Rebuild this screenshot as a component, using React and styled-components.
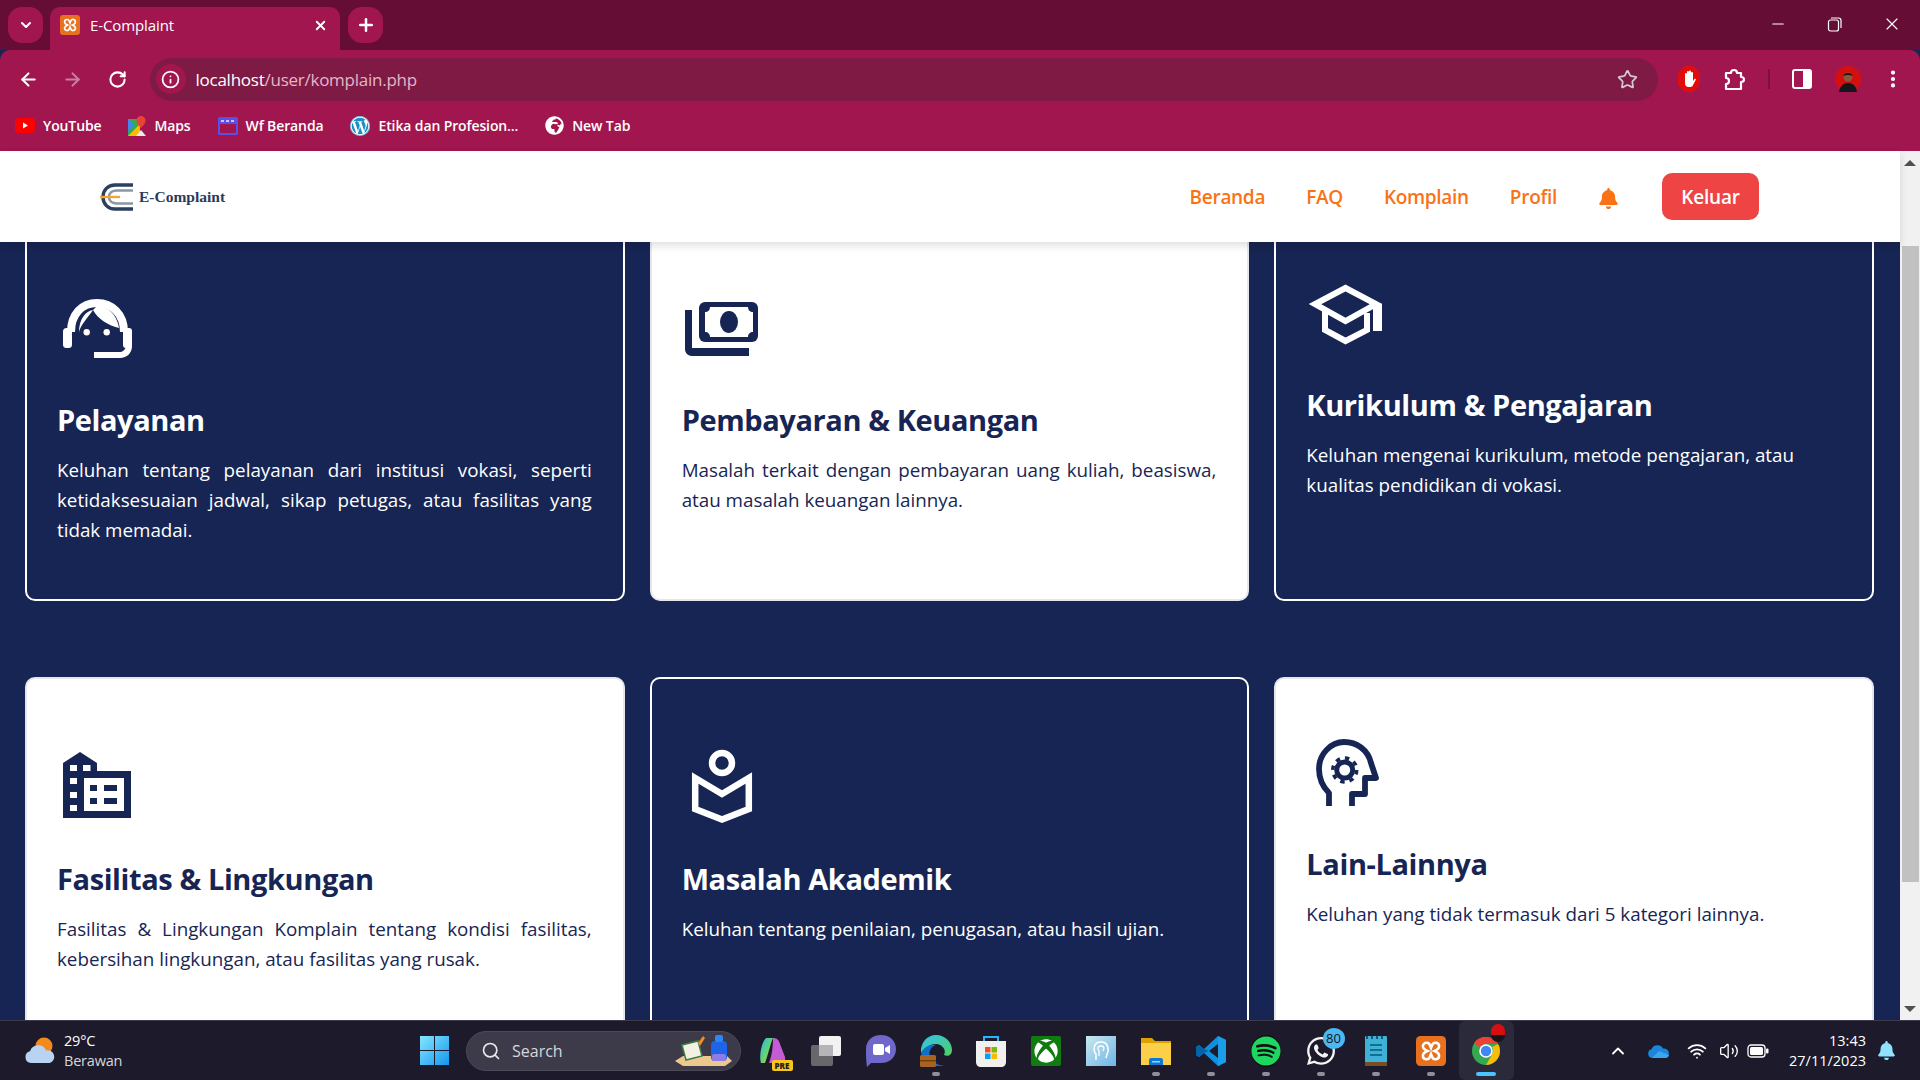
import React from "react";
import styled, { createGlobalStyle } from "styled-components";
import { ArrowLeft, ArrowRight, RotateCw, Info, Star, MoreVertical, ChevronDown, Plus, X, Minus, Search, Wifi, Volume2, ChevronUp } from "lucide-react";
import { FaBell, FaWordpress, FaGlobeAfrica, FaXbox, FaSpotify, FaWhatsapp } from "react-icons/fa";

const Global = createGlobalStyle`
  html, body { margin: 0; padding: 0; height: 100%; overflow: hidden; }
  body { font-family: "Open Sans", "Noto Sans", sans-serif; }
  * { box-sizing: border-box; }
`;

const NAVY = "#172554";
const FONT = `"Open Sans", "Noto Sans", sans-serif`;

const Screen = styled.div`
  width: 1920px; height: 1080px; display: flex; flex-direction: column; overflow: hidden; background: ${NAVY};
`;

/* ---------- browser chrome ---------- */
const TabStrip = styled.div`
  height: 50px; flex: none; background: #650d35; display: flex; align-items: flex-end; padding-left: 8px; color: #fff;
`;
const RoundBtn = styled.div`
  width: ${p => p.$w}px; height: 36px; margin: 0 0 7px ${p => p.$ml || 0}px; border-radius: 14px; background: #a1164f;
  display: flex; align-items: center; justify-content: center;
`;
const Tab = styled.div`
  width: 290px; height: 43px; margin-left: 7px; background: #a1164f; border-radius: 10px 10px 0 0;
  display: flex; align-items: center; padding: 0 12px 7px 10px; gap: 10px; font-size: 15px; font-weight: 500;
`;
const TabTitle = styled.span`flex: 1; letter-spacing: -0.1px;`;
const WinControls = styled.div`
  margin-left: auto; display: flex; height: 50px; align-items: flex-start;
`;
const WinBtn = styled.div`
  width: 57px; height: 48px; display: flex; align-items: center; justify-content: center;
`;
const Toolbar = styled.div`
  height: 58px; flex: none; background: #a1164f; border-radius: 10px 10px 0 0; display: flex; align-items: center;
  padding-left: 6px; color: #fff;
`;
const NavSlot = styled.div`
  width: 44.5px; display: flex; justify-content: center; opacity: ${p => p.$dim ? 0.45 : 1};
`;
const UrlPill = styled.div`
  width: 1508px; height: 43px; margin: 0 9px 0 10px; flex: none; border-radius: 22px; background: #7f1a44; display: flex; align-items: center;
  padding: 0 20px 0 6px;
`;
const InfoDot = styled.div`
  width: 30px; height: 30px; border-radius: 50%; background: #a1164f; display: flex; align-items: center; justify-content: center;
`;
const UrlText = styled.div`
  margin-left: 10px; flex: 1; font-size: 17px; letter-spacing: -0.25px; color: #fff;
  span { color: #e2b7c9; }
`;
const ActionSlot = styled.div`
  width: ${p => p.$w || 45.5}px; display: flex; justify-content: center; align-items: center;
`;
const ToolDivider = styled.div`
  width: 2px; height: 20px; background: #7d1040; margin: 0 10px;
`;
const Bookmarks = styled.div`
  height: 43px; flex: none; background: #a1164f; display: flex; align-items: center; padding: 0 0 8px 15px; gap: 27px; color: #fff;
`;
const Bookmark = styled.div`
  display: flex; align-items: center; gap: 8px; font-size: 14px; font-weight: 600; letter-spacing: -0.12px; white-space: nowrap;
`;
const WpMark = styled.span`
  width: 20px; height: 20px; border-radius: 50%; background: #fff; color: #1d8fc4; display: flex;
`;

/* ---------- page ---------- */
const Viewport = styled.div`
  flex: 1; min-height: 0; display: flex;
`;
const Page = styled.div`
  flex: 1; min-width: 0; display: flex; flex-direction: column; background: ${NAVY};
`;
const Nav = styled.nav`
  height: 91px; flex: none; background: #fff; display: flex; align-items: center; padding: 0 141px 0 100px;
  position: relative; z-index: 2; box-shadow: 0 4px 8px rgba(0,0,0,.12);
`;
const Brand = styled.div`
  display: flex; align-items: center; gap: 5px; margin-right: auto;
`;
const BrandName = styled.span`
  font-family: "Liberation Serif", serif; font-weight: 700; font-size: 15.5px; color: #2b3a5a;
`;
const NavLinks = styled.div`
  display: flex; align-items: center; gap: 41px;
`;
const NavLink = styled.a`
  font-size: 19px; font-weight: 600; color: #f97316; letter-spacing: -0.3px;
`;
const BellWrap = styled.div`
  margin: 4px 43px 0 41px; display: flex; color: #f97316;
`;
const Logout = styled.button`
  width: 97px; height: 47px; border: 0; border-radius: 10px; background: #ef4444; color: #fff;
  font-family: ${FONT}; font-size: 19px; font-weight: 600; letter-spacing: -0.2px;
`;
const Content = styled.div`
  flex: 1; min-height: 0; overflow: hidden;
`;
const Grid = styled.div`
  margin-top: -24px; padding: 0 26px 0 25px; display: grid; grid-template-columns: repeat(3, 1fr); column-gap: 25px; row-gap: 76px;
`;
const Card = styled.article`
  height: 383px; border-radius: 10px; padding: ${p => p.$tight ? 51 : 66}px 31px 0 30px;
  border: 2px solid ${p => p.$light ? "#e5e7eb" : "#fff"};
  background: ${p => p.$light ? "#fff" : NAVY};
  color: ${p => p.$light ? NAVY : "#fff"};
`;
const IconBox = styled.svg`
  display: block; width: 80px; height: 80px;
`;
const CardTitle = styled.h3`
  margin: 34px 0 0; font-size: 29px; font-weight: 700; line-height: 40px; letter-spacing: -0.4px;
`;
const CardText = styled.p`
  margin: 15px 0 0; font-size: 18.8px; line-height: 30px; text-align: ${p => p.$left ? "left" : "justify"};
`;
const ScrollBar = styled.div`
  width: 20px; flex: none; background: #f1f1f1; display: flex; flex-direction: column; align-items: center;
`;
const ScrollBtn = styled.div`
  height: 23px; flex: none; display: flex; align-items: center; justify-content: center;
`;
const Tri = styled.div`
  width: 0; height: 0; border-left: 6px solid transparent; border-right: 6px solid transparent;
  ${p => p.$down ? "border-top: 6px solid #505050;" : "border-bottom: 6px solid #505050;"}
`;
const Thumb = styled.div`
  width: 17px; height: 636px; margin-top: 72px; background: #c1c1c1;
`;
const Spacer = styled.div`flex: 1;`;

/* ---------- taskbar ---------- */
const Taskbar = styled.footer`
  height: 60px; flex: none; background: #1c1a2b; border-top: 1px solid #3b3a4a; display: flex; align-items: center; color: #fff;
`;
const Weather = styled.div`
  width: 420px; display: flex; align-items: center; padding-left: 24px; gap: 8px;
`;
const WeatherText = styled.div`
  font-size: 14.5px; line-height: 20px; letter-spacing: -0.2px; color: #d8d8dc;
  b { display: block; font-weight: 400; color: #fff; }
`;
const SearchBox = styled.div`
  width: 275px; height: 40px; margin-left: 17px; border-radius: 20px; background: #3d3b49; border: 1px solid #4c4a58; display: flex; align-items: center;
  padding: 0 7px 0 14px; gap: 11px; font-size: 16px; color: #d6d6da;
`;
const SearchLabel = styled.span`flex: 1;`;
const CopilotSlot = styled.div`
  width: 55px; height: 59px; margin-left: 3.5px; display: flex; align-items: center; justify-content: center; position: relative;
`;
const Apps = styled.div`
  display: flex; margin-left: -1px;
`;
const Slot = styled.div`
  width: 55px; height: 59px; display: flex; align-items: center; justify-content: center; position: relative;
  border-radius: 6px;
  background: ${p => p.$active ? "#2b2a3a" : "transparent"};
`;
const Dot = styled.span`
  position: absolute; left: 50%; bottom: 4px; transform: translateX(-50%); height: 4px; border-radius: 2px;
  width: ${p => p.$active ? 20 : 8}px; background: ${p => p.$active ? "#4cc2ff" : "#8f8f98"};
`;
const Count = styled.span`
  position: absolute; left: 29px; top: 7px; width: 22px; height: 21px; border-radius: 50%; background: #4cb8f0; color: #10151f;
  font-size: 13px; line-height: 21px; text-align: center;
`;
const PreBadge = styled.span`
  position: absolute; left: 27px; top: 39px; width: 21px; height: 11px; border-radius: 2px; background: #f7c61e; color: #222; font-size: 8px; font-weight: 800; line-height: 11px; text-align: center;
`;
const Tray = styled.div`
  margin-left: auto; display: flex; align-items: center; padding-right: 24px;
`;
const TrayIcon = styled.div`
  width: ${p => p.$w}px; display: flex; justify-content: center;
`;
const Clock = styled.div`
  width: 92px; margin: 0 11px 0 0; text-align: right; font-size: 14.5px; line-height: 20px; letter-spacing: 0;
`;

/* ---------- drawings ---------- */
const CardIcon = ({ children }) => <IconBox viewBox="0 0 80 80" fill="currentColor">{children}</IconBox>;

const Headset = () => (
  <CardIcon>
    <path d="M14 46C14 28 25 17 40 17S67 28 67 46" fill="none" stroke="currentColor" strokeWidth="8" />
    <rect x="6" y="42" width="9" height="20" rx="3.5" />
    <rect x="66" y="42" width="9" height="20" rx="3" />
    <path d="M37 66H62C66 66 68 64 69 60H75C75 67 70 72 63 72H37Z" />
    <path d="M36 24C41 33 50 39 62 42C60 30 52 20 40 20Z" />
    <path d="M22 46C24 38 30 33 36 24C28 25 22 34 22 46Z" />
    <circle cx="29.7" cy="46.3" r="3.2" />
    <circle cx="49.7" cy="46.3" r="3.2" />
  </CardIcon>
);
const Money = () => (
  <CardIcon>
    <rect x="17" y="16" width="59" height="40" rx="6" />
    <path fill="#fff" d="M28 21H66C66 24 68 26 71 26V46C68 46 66 48 66 51H28C28 48 26 46 23 46V26C26 26 28 24 28 21Z" />
    <ellipse cx="47" cy="36" rx="9" ry="11" />
    <path d="M3 24H10V62H67V70H10C6 70 3 67 3 63Z" />
  </CardIcon>
);
const Cap = () => (
  <CardIcon>
    <g fill="none" stroke="currentColor" strokeWidth="6">
      <path d="M39.5 17L9 33L39.5 50L70 33Z" />
      <path d="M19 40V59L39.5 70L61 59V42" />
    </g>
    <path d="M67 31L76 33V60H67Z" />
  </CardIcon>
);
const Building = () => (
  <CardIcon>
    <path fillRule="evenodd" d="M6 18L23 7L40 18V26H74V73H6ZM13 20V26H20V20ZM26 20V26H33.5V20ZM13 33V39H20V33ZM13 47V53H20V47ZM13 60V66H20V60ZM27 33V66H67V33Z" />
    <path d="M33 40H40V46H33ZM47 40H60V46H47ZM33 53H40V59H33ZM47 53H60V59H47Z" />
  </CardIcon>
);
const Book = () => (
  <CardIcon>
    <g fill="none" stroke="currentColor" strokeWidth="6.5">
      <circle cx="40" cy="18" r="10" />
      <path d="M13.2 33L40 49L66.8 33V64L40 74.500L13.2 64Z" />
    </g>
  </CardIcon>
);
const Head = () => (
  <CardIcon>
    <path d="M23 76V63C16 56 13 48 13 39C13 24 25 12 38 12C51 12 62 20 65 33L70 48H59V64H46V76" fill="none" stroke="currentColor" strokeWidth="5.8" strokeLinejoin="round" />
    <circle cx="38.7" cy="40" r="8" fill="none" stroke="currentColor" strokeWidth="5" />
    <circle cx="38.7" cy="40" r="12" fill="none" stroke="currentColor" strokeWidth="3.5" strokeDasharray="4.4 5" />
  </CardIcon>
);

const Logo = () => (
  <svg width="34" height="30" viewBox="0 0 34 30" fill="none">
    <path d="M33 3H15C8 3 3 8 3 15S8 27 15 27H33" stroke="#2b3f5f" strokeWidth="3.4" />
    <path d="M33 8.5H17C12 8.5 9 11 9 15S12 21.5 17 21.5H33" stroke="#8b97a8" strokeWidth="2.6" />
    <path d="M0 15H20" stroke="#f2a630" strokeWidth="2.4" />
  </svg>
);
const Xampp = ({ s = 20 }) => (
  <svg width={s} height={s} viewBox="0 0 20 20">
    <rect width="20" height="20" rx="3" fill="#e8711f" />
    <path d="M7 4.500a2.400 2.400 0 0 0-2.400 2.400C4.600 8.500 6 9.300 7.600 10 6 10.700 4.600 11.500 4.600 13.100a2.400 2.400 0 0 0 4.700.7L10 12l.7 1.800a2.400 2.400 0 0 0 4.700-.7c0-1.600-1.400-2.400-3-3.100 1.600-.7 3-1.500 3-3.100a2.400 2.400 0 0 0-4.700-.7L10 8l-.7-1.800A2.400 2.400 0 0 0 7 4.500Z" fill="none" stroke="#fff" strokeWidth="1.700" />
  </svg>
);
const Hand = () => (
  <svg width="22" height="26" viewBox="0 0 22 26">
    <path d="M7 0H15L22 7V19L15 26H7L0 19V7Z" fill="#e10c0c" />
    <path d="M7 15V8a1 1 0 0 1 2 0V6a1 1 0 0 1 2 0V5.500a1 1 0 0 1 2 0V7a1 1 0 0 1 2 0v8l1.500-2c.8-.8 1.800 0 1.300.8L14.500 20c-.6.800-1.500 1-2.500 1h-1.500C8.500 21 7 19.500 7 17.500Z" fill="#fff" />
  </svg>
);
const Puzzle = () => (
  <svg width="22" height="24" viewBox="0 0 22 24" fill="none" stroke="#fff" strokeWidth="2.2" strokeLinejoin="round">
    <path d="M2 6H7C7 2 13 2 13 6H17V10C21 10 21 15 17 15V22H2V17C6 17 6 11 2 11Z" />
  </svg>
);
const SidePanel = () => (
  <svg width="20" height="20" viewBox="0 0 20 20">
    <rect x="1" y="1" width="18" height="18" rx="2" fill="none" stroke="#fff" strokeWidth="2" />
    <rect x="11" y="1" width="8" height="18" fill="#fff" />
  </svg>
);
const Avatar = () => (
  <svg width="26" height="26" viewBox="0 0 26 26">
    <circle cx="13" cy="13" r="13" fill="#d50f0f" />
    <path d="M4 26C5 19 9 17 13 17S21 19 22 26Z" fill="#15151c" />
    <circle cx="13" cy="11" r="4.500" fill="#8a5a3c" />
    <path d="M8.500 10C8.500 6 17.500 6 17.500 10C15 8.500 11 8.500 8.500 10Z" fill="#161616" />
  </svg>
);
const Restore = () => (
  <svg width="15" height="15" viewBox="0 0 15 15" fill="none" stroke="#fff" strokeWidth="1.200">
    <rect x="1.500" y="3" width="10" height="11" rx="2" />
    <path d="M4 1H11.500C13 1 14 2 14 3.500V11" />
  </svg>
);
const YouTube = () => (
  <svg width="20" height="15" viewBox="0 0 20 15"><rect width="20" height="15" rx="4" fill="#f00" /><path d="M8 4.500L13 7.500L8 10.500Z" fill="#fff" /></svg>
);
const Maps = () => (
  <svg width="18" height="20" viewBox="0 0 18 20">
    <path d="M0 3H12V20H0Z" fill="#34a853" />
    <path d="M0 20L12 8V20Z" fill="#fbbc04" />
    <path d="M0 3L6 9L0 15Z" fill="#4285f4" />
    <path d="M8 20L13 14L18 20Z" fill="#e8eaed" />
    <path d="M13 0a4.500 4.500 0 0 1 4.500 4.500C17.500 8 13 12 13 12S8.500 8 8.500 4.500A4.500 4.500 0 0 1 13 0Z" fill="#ea4335" />
  </svg>
);
const WfIcon = () => (
  <svg width="20" height="18" viewBox="0 0 20 18"><rect width="20" height="18" rx="1.500" fill="#5b4fe6" /><rect x="2" y="7" width="16" height="9" fill="#a1164f" /><path d="M3 3H6V5H3ZM8 3H11V5H8ZM13 3H16V5H13Z" fill="#c8c2ff" /></svg>
);
const WeatherIcon = () => (
  <svg width="32" height="28" viewBox="0 0 32 28">
    <circle cx="20" cy="9" r="8.500" fill="#f28a1d" />
    <path d="M7 26A6 6 0 0 1 6 14.200 8.500 8.500 0 0 1 22 13.500 6.300 6.300 0 0 1 25.500 26Z" fill="#b9d3f2" />
  </svg>
);
const WinLogo = () => (
  <svg width="29" height="29" viewBox="0 0 29 29">
    <defs><linearGradient id="wl" x1="0" y1="0" x2="1" y2="1"><stop offset="0" stopColor="#86e7ff" /><stop offset="1" stopColor="#1496ee" /></linearGradient></defs>
    <path d="M0 0H14V14H0ZM15 0H29V14H15ZM0 15H14V29H0ZM15 15H29V29H15Z" fill="url(#wl)" />
  </svg>
);
const SearchDecor = () => (
  <svg width="58" height="32" viewBox="0 0 58 32">
    <path d="M0 26L8 21H52L57 26L50 31H8Z" fill="#ecc88f" />
    <path d="M7 10L23 6L27 21L11 25Z" fill="#f3f1e3" stroke="#3f7d44" strokeWidth="1.500" />
    <path d="M23 8L28 1L30 3L25 11Z" fill="#f28c28" />
    <rect x="36" y="6" width="16" height="20" rx="4" fill="#1f63e6" />
    <rect x="40" y="0" width="8" height="7" rx="2" fill="#2c86f5" />
    <rect x="37" y="19" width="14" height="7" rx="2" fill="#8e7be8" />
  </svg>
);
const Copilot = () => (
  <svg width="28" height="28" viewBox="0 0 28 28">
    <defs><linearGradient id="cp" x1="0" y1="0" x2="1" y2="1"><stop offset="0" stopColor="#2fb5f0" /><stop offset=".5" stopColor="#5ed27a" /><stop offset="1" stopColor="#f0c030" /></linearGradient></defs>
    <path d="M8 1H15C12 8 10 18 7 26H3C1 20 3 6 8 1Z" fill="url(#cp)" />
    <path d="M15 1C19 1 21 3 22 7L27 20C28 24 25 26 22 26H11C14 18 15 10 15 1Z" fill="#c65bd6" />
  </svg>
);
const TaskView = () => (
  <svg width="30" height="30" viewBox="0 0 30 30">
    <rect x="8" y="0" width="22" height="20" rx="2" fill="#f2f2f2" />
    <rect x="0" y="9" width="22" height="21" rx="2" fill="#6f6f72" opacity=".92" />
    <rect x="8" y="9" width="14" height="11" fill="#b5b5b7" />
  </svg>
);
const Teams = () => (
  <svg width="30" height="32" viewBox="0 0 30 32">
    <path d="M15 0C24 0 30 6 30 14S24 28 15 28H5L1 32C0 26 0 20 0 14C0 6 6 0 15 0Z" fill="#6f67c9" />
    <rect x="7" y="9" width="11" height="11" rx="2" fill="#fff" />
    <path d="M19 13L24 10V19L19 16Z" fill="#fff" />
  </svg>
);
const Edge = () => (
  <svg width="32" height="32" viewBox="0 0 32 32">
    <defs><linearGradient id="ed" x1="0" y1="0" x2="1" y2="1"><stop offset="0" stopColor="#35c1f1" /><stop offset="1" stopColor="#4ed05f" /></linearGradient></defs>
    <path d="M16 0C25 0 32 7 32 15C32 20 28 22 24 20C27 15 22 9 16 9C9 9 4 14 1 18C0 8 7 0 16 0Z" fill="url(#ed)" />
    <path d="M1 18C4 12 10 9 16 10C10 12 7 19 12 25C15 29 20 31 25 30C18 33 4 30 1 18Z" fill="#0f6fc6" />
    <rect x="0" y="20" width="16" height="12" rx="1.500" fill="#a8641f" />
    <rect x="0" y="25" width="16" height="1.500" fill="#6d3f11" />
  </svg>
);
const Store = () => (
  <svg width="30" height="32" viewBox="0 0 30 32">
    <path d="M8 7V2H22V7" fill="none" stroke="#29b6f6" strokeWidth="2" />
    <path d="M0 6H30V27C30 30 28 32 25 32H5C2 32 0 30 0 27Z" fill="#f0f0f0" />
    <rect x="9" y="12" width="5.500" height="5.500" fill="#f25022" /><rect x="15.500" y="12" width="5.500" height="5.500" fill="#7fba00" />
    <rect x="9" y="18.500" width="5.500" height="5.500" fill="#00a4ef" /><rect x="15.500" y="18.500" width="5.500" height="5.500" fill="#ffb900" />
  </svg>
);
const XboxTile = styled.div`
  width: 30px; height: 30px; border-radius: 2px; background: #107c10; color: #fff; display: flex; align-items: center; justify-content: center;
`;
const SpotifyMark = styled.div`
  width: 30px; height: 32px; border-radius: 50%; background: #111; color: #1ed760; display: flex; align-items: center; justify-content: center;
`;
const Photo = () => (
  <svg width="30" height="30" viewBox="0 0 30 30">
    <defs><linearGradient id="ph" x1="0" y1="0" x2="1" y2="1"><stop offset="0" stopColor="#c9e9ef" /><stop offset="1" stopColor="#6db4e6" /></linearGradient></defs>
    <rect width="30" height="30" fill="url(#ph)" />
    <path d="M10 24V18C7 15 7 6 15 6S23 15 21 18L20 22" fill="none" stroke="#fff" strokeWidth="1.500" />
    <path d="M13 20V15C11 12 12 10 15 10S19 12 17 15" fill="none" stroke="#fff" strokeWidth="1.300" />
  </svg>
);
const Folder = () => (
  <svg width="30" height="30" viewBox="0 0 30 30">
    <path d="M0 2H11L14 5H30V12H0Z" fill="#e0a100" />
    <rect x="0" y="7" width="30" height="22" fill="#fbcf48" />
    <path d="M8 29V24C8 23 9 22 10 22H20C21 22 22 23 22 24V29Z" fill="#0f78d4" />
    <rect x="11" y="25" width="8" height="1.500" fill="#9ad0ff" />
  </svg>
);
const VSCode = () => (
  <svg width="30" height="30" viewBox="0 0 30 30">
    <path d="M22 0L30 4V26L22 30L8 17L3 21L0 19V11L3 9L8 13ZM22 8L13 15L22 22Z" fill="#0f8fe0" />
    <path d="M22 0L22 30L30 26V4Z" fill="#1b9de8" />
    <path d="M8 13L3 9L0 11V19L3 21L8 17L13 15Z" fill="#0065a9" />
  </svg>
);
const Notes = () => (
  <svg width="22" height="30" viewBox="0 0 22 30">
    <rect width="22" height="28" rx="1" fill="#3fb0d8" />
    <rect y="26" width="22" height="4" fill="#7a4d25" />
    <path d="M2 0V3M7 0V3M12 0V3M17 0V3" stroke="#145a75" strokeWidth="2" />
    <path d="M5 9H17M5 14H17M5 19H17" stroke="#10708f" strokeWidth="2" />
  </svg>
);
const Chrome = () => (
  <svg width="28" height="28" viewBox="0 0 28 28">
    <circle cx="14" cy="14" r="14" fill="#34a853" />
    <path d="M14 0A14 14 0 0 1 26.100 7H14A7 7 0 0 0 7.900 10.500L2 6A14 14 0 0 1 14 0Z" fill="#ea4335" />
    <path d="M26.100 7A14 14 0 0 1 14 28L20 17.500A7 7 0 0 0 20 10Z" fill="#fbbc04" />
    <circle cx="14" cy="14" r="6.800" fill="#fff" /><circle cx="14" cy="14" r="5.200" fill="#4285f4" />
  </svg>
);
const ChromeBadge = styled.span`
  position: absolute; left: 32px; top: 3px; width: 14px; height: 18px; border-radius: 7px; background: linear-gradient(#d50f0f 60%, #15151c 60%);
`;
const OneDrive = () => (
  <svg width="22" height="14" viewBox="0 0 22 14">
    <path d="M5 14A4.500 4.500 0 0 1 4.500 5.200 6.500 6.500 0 0 1 16 4.500 4.800 4.800 0 0 1 18 14Z" fill="#1b86dc" />
    <path d="M5 14L12 7L22 11C22 13 20 14 18 14Z" fill="#39a7ee" />
  </svg>
);
const Battery = () => (
  <svg width="22" height="14" viewBox="0 0 22 14">
    <rect x="1" y="1" width="17" height="12" rx="3" fill="none" stroke="#fff" strokeWidth="1.300" />
    <rect x="3" y="3" width="13" height="8" rx="1.500" fill="#fff" />
    <rect x="19" y="4.500" width="2.500" height="5" rx="1" fill="#fff" />
  </svg>
);

const cards = [
  { light: false, Icon: Headset, title: "Pelayanan", text: "Keluhan tentang pelayanan dari institusi vokasi, seperti ketidaksesuaian jadwal, sikap petugas, atau fasilitas yang tidak memadai." },
  { light: true, Icon: Money, title: "Pembayaran & Keuangan", text: "Masalah terkait dengan pembayaran uang kuliah, beasiswa, atau masalah keuangan lainnya." },
  { light: false, tight: true, Icon: Cap, title: "Kurikulum & Pengajaran", text: "Keluhan mengenai kurikulum, metode pengajaran, atau kualitas pendidikan di vokasi." },
  { light: true, Icon: Building, title: "Fasilitas & Lingkungan", text: "Fasilitas & Lingkungan Komplain tentang kondisi fasilitas, kebersihan lingkungan, atau fasilitas yang rusak." },
  { light: false, Icon: Book, title: "Masalah Akademik", text: "Keluhan tentang penilaian, penugasan, atau hasil ujian." },
  { light: true, tight: true, Icon: Head, title: "Lain-Lainnya", text: "Keluhan yang tidak termasuk dari 5 kategori lainnya." },
];

const bookmarks = [
  [<YouTube key="i" />, "YouTube"],
  [<Maps key="i" />, "Maps"],
  [<WfIcon key="i" />, "Wf Beranda"],
  [<WpMark key="i"><FaWordpress size={20} /></WpMark>, "Etika dan Profesion..."],
  [<FaGlobeAfrica key="i" size={19} color="#fff" />, "New Tab"],
];

const apps = [
  { key: "task", el: <TaskView /> },
  { key: "teams", el: <Teams /> },
  { key: "edge", el: <Edge />, dot: true },
  { key: "store", el: <Store /> },
  { key: "xbox", el: <XboxTile><FaXbox size={24} /></XboxTile> },
  { key: "photo", el: <Photo /> },
  { key: "folder", el: <Folder />, dot: true },
  { key: "code", el: <VSCode />, dot: true },
  { key: "spotify", el: <SpotifyMark><FaSpotify size={30} /></SpotifyMark>, dot: true },
  { key: "wa", el: <FaWhatsapp size={32} color="#f4f4f4" />, dot: true, count: "80" },
  { key: "notes", el: <Notes />, dot: true },
  { key: "xampp", el: <Xampp s={30} />, dot: true },
  { key: "chrome", el: <Chrome />, active: true },
];

export default function App() {
  return (
    <Screen>
      <Global />
      <TabStrip>
        <RoundBtn $w={35}><ChevronDown size={16} strokeWidth={3} color="#fff" /></RoundBtn>
        <Tab>
          <Xampp />
          <TabTitle>E-Complaint</TabTitle>
          <X size={15} strokeWidth={3} color="#fff" />
        </Tab>
        <RoundBtn $w={35} $ml={8}><Plus size={20} strokeWidth={3} color="#fff" /></RoundBtn>
        <WinControls>
          <WinBtn><Minus size={18} strokeWidth={1.5} color="#fff" /></WinBtn>
          <WinBtn><Restore /></WinBtn>
          <WinBtn><X size={20} strokeWidth={1.4} color="#fff" /></WinBtn>
        </WinControls>
      </TabStrip>
      <Toolbar>
        <NavSlot><ArrowLeft size={21} strokeWidth={2.4} /></NavSlot>
        <NavSlot $dim><ArrowRight size={21} strokeWidth={2.4} /></NavSlot>
        <NavSlot><RotateCw size={19} strokeWidth={2.6} /></NavSlot>
        <UrlPill>
          <InfoDot><Info size={19} strokeWidth={2.2} color="#fff" /></InfoDot>
          <UrlText>localhost<span>/user/komplain.php</span></UrlText>
          <Star size={21} strokeWidth={2} color="#d5c8cf" />
        </UrlPill>
        <ActionSlot><Hand /></ActionSlot>
        <ActionSlot><Puzzle /></ActionSlot>
        <ToolDivider />
        <ActionSlot><SidePanel /></ActionSlot>
        <ActionSlot><Avatar /></ActionSlot>
        <ActionSlot><MoreVertical size={22} strokeWidth={2.6} color="#fff" /></ActionSlot>
      </Toolbar>
      <Bookmarks>
        {bookmarks.map(([icon, label]) => (
          <Bookmark key={label}>{icon}<span>{label}</span></Bookmark>
        ))}
      </Bookmarks>
      <Viewport>
        <Page>
          <Nav>
            <Brand><Logo /><BrandName>E-Complaint</BrandName></Brand>
            <NavLinks>
              <NavLink>Beranda</NavLink>
              <NavLink>FAQ</NavLink>
              <NavLink>Komplain</NavLink>
              <NavLink>Profil</NavLink>
            </NavLinks>
            <BellWrap><FaBell size={21} /></BellWrap>
            <Logout>Keluar</Logout>
          </Nav>
          <Content>
            <Grid>
              {cards.map(({ light, tight, Icon, title, text }) => (
                <Card key={title} $light={light} $tight={tight}>
                  <Icon />
                  <CardTitle>{title}</CardTitle>
                  <CardText $left={tight}>{text}</CardText>
                </Card>
              ))}
            </Grid>
          </Content>
        </Page>
        <ScrollBar>
          <ScrollBtn><Tri /></ScrollBtn>
          <Thumb />
          <Spacer />
          <ScrollBtn><Tri $down /></ScrollBtn>
        </ScrollBar>
      </Viewport>
      <Taskbar>
        <Weather>
          <WeatherIcon />
          <WeatherText><b>29°C</b>Berawan</WeatherText>
        </Weather>
        <WinLogo />
        <SearchBox>
          <Search size={20} strokeWidth={2} color="#e8e8ea" />
          <SearchLabel>Search</SearchLabel>
          <SearchDecor />
        </SearchBox>
        <CopilotSlot><Copilot /><PreBadge>PRE</PreBadge></CopilotSlot>
        <Apps>
          {apps.map(a => (
            <Slot key={a.key} $active={a.active}>
              {a.el}
              {a.count && <Count>{a.count}</Count>}
              {a.key === "chrome" && <ChromeBadge />}
              {(a.dot || a.active) && <Dot $active={a.active} />}
            </Slot>
          ))}
        </Apps>
        <Tray>
          <TrayIcon $w={40}><ChevronUp size={20} strokeWidth={2.2} /></TrayIcon>
          <TrayIcon $w={40}><OneDrive /></TrayIcon>
          <TrayIcon $w={38}><Wifi size={20} strokeWidth={2.2} /></TrayIcon>
          <TrayIcon $w={26}><Volume2 size={20} strokeWidth={1.6} /></TrayIcon>
          <TrayIcon $w={32}><Battery /></TrayIcon>
          <Clock>13:43<br />27/11/2023</Clock>
          <FaBell size={19} color="#8fe3ff" />
        </Tray>
      </Taskbar>
    </Screen>
  );
}
